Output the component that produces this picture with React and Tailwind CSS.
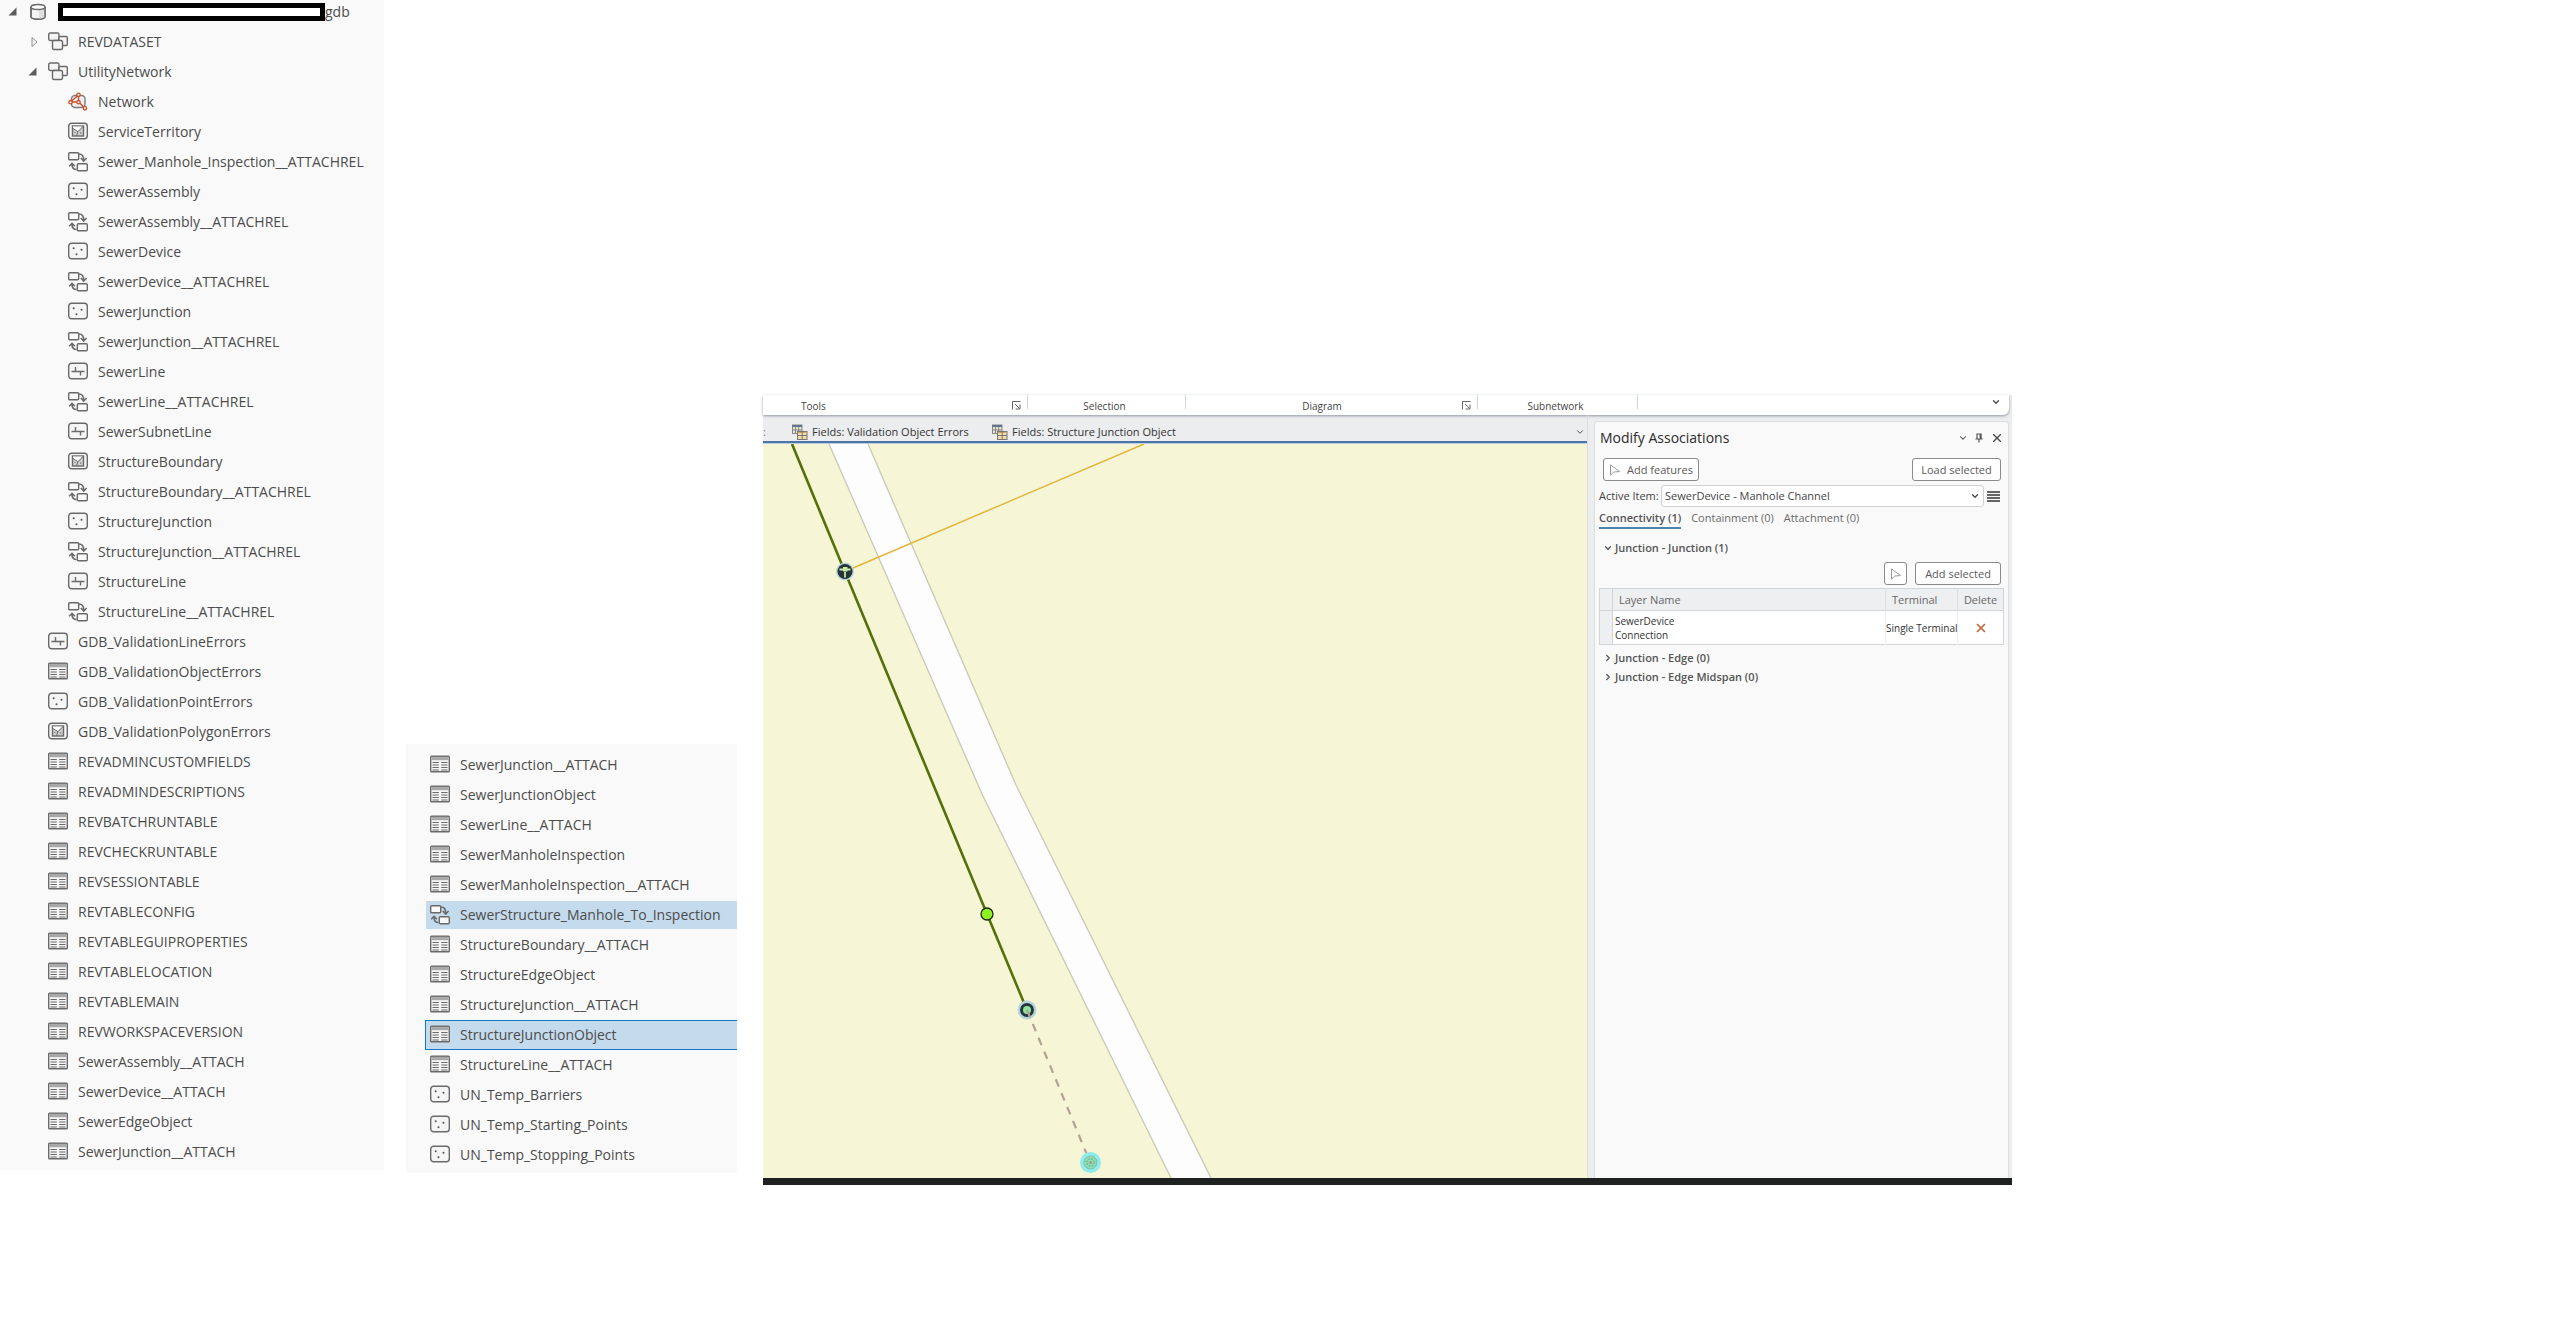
import { useState } from 'react';
import { ChevronDown, ChevronRight, X } from 'lucide-react';

const treeRows = [
  { level: 1, icon: 'dataset', name: 'REVDATASET', state: 'closed' },
  { level: 1, icon: 'dataset', name: 'UtilityNetwork', state: 'open' },
  { level: 2, icon: 'network', name: 'Network' },
  { level: 2, icon: 'polygon', name: 'ServiceTerritory' },
  { level: 2, icon: 'rel', name: 'Sewer_Manhole_Inspection__ATTACHREL' },
  { level: 2, icon: 'point', name: 'SewerAssembly' },
  { level: 2, icon: 'rel', name: 'SewerAssembly__ATTACHREL' },
  { level: 2, icon: 'point', name: 'SewerDevice' },
  { level: 2, icon: 'rel', name: 'SewerDevice__ATTACHREL' },
  { level: 2, icon: 'point', name: 'SewerJunction' },
  { level: 2, icon: 'rel', name: 'SewerJunction__ATTACHREL' },
  { level: 2, icon: 'line', name: 'SewerLine' },
  { level: 2, icon: 'rel', name: 'SewerLine__ATTACHREL' },
  { level: 2, icon: 'line', name: 'SewerSubnetLine' },
  { level: 2, icon: 'polygon', name: 'StructureBoundary' },
  { level: 2, icon: 'rel', name: 'StructureBoundary__ATTACHREL' },
  { level: 2, icon: 'point', name: 'StructureJunction' },
  { level: 2, icon: 'rel', name: 'StructureJunction__ATTACHREL' },
  { level: 2, icon: 'line', name: 'StructureLine' },
  { level: 2, icon: 'rel', name: 'StructureLine__ATTACHREL' },
  { level: 1, icon: 'line', name: 'GDB_ValidationLineErrors' },
  { level: 1, icon: 'table', name: 'GDB_ValidationObjectErrors' },
  { level: 1, icon: 'point', name: 'GDB_ValidationPointErrors' },
  { level: 1, icon: 'polygon', name: 'GDB_ValidationPolygonErrors' },
  { level: 1, icon: 'table', name: 'REVADMINCUSTOMFIELDS' },
  { level: 1, icon: 'table', name: 'REVADMINDESCRIPTIONS' },
  { level: 1, icon: 'table', name: 'REVBATCHRUNTABLE' },
  { level: 1, icon: 'table', name: 'REVCHECKRUNTABLE' },
  { level: 1, icon: 'table', name: 'REVSESSIONTABLE' },
  { level: 1, icon: 'table', name: 'REVTABLECONFIG' },
  { level: 1, icon: 'table', name: 'REVTABLEGUIPROPERTIES' },
  { level: 1, icon: 'table', name: 'REVTABLELOCATION' },
  { level: 1, icon: 'table', name: 'REVTABLEMAIN' },
  { level: 1, icon: 'table', name: 'REVWORKSPACEVERSION' },
  { level: 1, icon: 'table', name: 'SewerAssembly__ATTACH' },
  { level: 1, icon: 'table', name: 'SewerDevice__ATTACH' },
  { level: 1, icon: 'table', name: 'SewerEdgeObject' },
  { level: 1, icon: 'table', name: 'SewerJunction__ATTACH' },
];

const moreRows = [
  { icon: 'table', name: 'SewerJunction__ATTACH' },
  { icon: 'table', name: 'SewerJunctionObject' },
  { icon: 'table', name: 'SewerLine__ATTACH' },
  { icon: 'table', name: 'SewerManholeInspection' },
  { icon: 'table', name: 'SewerManholeInspection__ATTACH' },
  { icon: 'rel', name: 'SewerStructure_Manhole_To_Inspection', mark: 'selected' },
  { icon: 'table', name: 'StructureBoundary__ATTACH' },
  { icon: 'table', name: 'StructureEdgeObject' },
  { icon: 'table', name: 'StructureJunction__ATTACH' },
  { icon: 'table', name: 'StructureJunctionObject', mark: 'focused' },
  { icon: 'table', name: 'StructureLine__ATTACH' },
  { icon: 'point', name: 'UN_Temp_Barriers' },
  { icon: 'point', name: 'UN_Temp_Starting_Points' },
  { icon: 'point', name: 'UN_Temp_Stopping_Points' },
];

const levelPadding = ['pl-2', 'pl-7', 'pl-12'];

const markStyles = {
  selected: 'border border-r-0 border-[#f9f9f9] bg-[#c4daed]',
  focused: 'border border-r-0 border-[#0f7ac2] bg-[#c4daed]',
};

function ItemIcon({ type }) {
  return (
    <svg viewBox="0 0 20 20" className="h-5 w-5 shrink-0" fill="none" stroke="#6a6a6a" strokeWidth="1.4">
      {type === 'database' && (
        <>
          <path d="M3 5v9.500c0 1.600 3 2.700 7 2.700s7-1.100 7-2.700V5" fill="#f4f4f4" />
          <path d="M11 7.500c3 0 5-.8 6-2v9c0 1.600-3 2.500-6 2.500z" fill="#dedede" stroke="none" />
          <path d="M3 5v9.500c0 1.600 3 2.700 7 2.700s7-1.100 7-2.700V5" />
          <ellipse cx="10" cy="5" rx="7" ry="2.500" fill="#fff" />
        </>
      )}
      {type === 'dataset' && (
        <>
          <rect x=".7" y="1" width="10.300" height="7.500" rx="1.500" fill="#f4f4f4" />
          <rect x="11" y="4.500" width="8.300" height="9" rx="1" fill="#f4f4f4" />
          <rect x="4.500" y="8.500" width="10" height="9" rx="1.500" fill="#f4f4f4" />
        </>
      )}
      {type === 'network' && (
        <>
          <rect x="3.500" y="3.500" width="13.500" height="12" rx="3.500" fill="#efefef" stroke="#7c7c7c" />
          <path d="M10.500 3v7M2.500 10h8M10.500 10l6.500 6M10 3.500L3 9.500" stroke="#c8502d" />
          <g fill="#f9f9f9" stroke="#c8502d" strokeWidth="1.300">
            <circle cx="10.500" cy="2.800" r="1.700" />
            <circle cx="2.500" cy="10.200" r="1.700" />
            <circle cx="10.500" cy="10.200" r="1.700" />
            <circle cx="17" cy="16.300" r="1.700" />
          </g>
        </>
      )}
      {type === 'rel' && (
        <>
          <rect x=".7" y=".7" width="10" height="7" rx="1" fill="#f9f9f9" />
          <rect x="9.300" y="11.800" width="10" height="7" rx="1" fill="#f9f9f9" />
          <path d="M11 2c3 0 4.700 2 4.700 6M12.800 6l2.900 3 2.900-3" strokeWidth="1.600" />
          <path d="M8.500 17.500c-3 0-4.500-1.800-4.500-5.500M1.200 14.300L4 11.300l2.900 3" strokeWidth="1.600" />
        </>
      )}
      {type === 'point' && (
        <>
          <rect x=".7" y="1.200" width="18.600" height="15.600" rx="3" fill="#f5f5f5" />
          <g fill="#555" stroke="none">
            <circle cx="5.700" cy="6.300" r="1" />
            <circle cx="13.500" cy="7.700" r="1" />
            <circle cx="8.500" cy="12.300" r="1" />
          </g>
        </>
      )}
      {type === 'line' && (
        <>
          <rect x=".7" y="1.200" width="18.600" height="15.600" rx="3" fill="#f5f5f5" />
          <path d="M3.500 9.500h13M7.500 5v4.500M12.500 9.500v4" />
        </>
      )}
      {type === 'polygon' && (
        <>
          <rect x=".7" y="1.200" width="18.600" height="15.600" rx="3" fill="#f5f5f5" />
          <rect x="4.500" y="4" width="11" height="10" fill="#cfcfcf" />
          <path d="M5 4.500h9.500L9.800 9.500 5 6.800z" fill="#fff" stroke="none" />
          <path d="M5 6.500l5 3.200 5-5.200M10 9.700l-1.500 4" strokeWidth="1" />
          <path d="M6.500 10.500h1M12 11h1.500" strokeWidth="1" />
        </>
      )}
      {type === 'table' && (
        <>
          <rect x=".7" y="1.200" width="18.600" height="15.600" rx=".8" fill="#f5f5f5" />
          <path d="M1.300 1.800h17.400v3.400H1.300z" fill="#a9a9a9" stroke="none" />
          <path
            d="M2.500 7.500h6.300M2.500 10h6.300M2.500 12.500h6.300M2.500 15h6.300M11.200 7.500h6.300M11.200 10h6.300M11.200 12.500h6.300M11.200 15h6.300"
            strokeWidth="1.200"
          />
        </>
      )}
    </svg>
  );
}

function Expander({ state }) {
  return (
    <svg viewBox="0 0 10 10" className="h-2.5 w-2.5 shrink-0">
      {state === 'open' && <path d="M8.500 .5v8H.5z" fill="#5c5c5c" />}
      {state === 'closed' && <path d="M4 0.500v9l5-4.500z" fill="none" stroke="#8c8c8c" />}
    </svg>
  );
}

function CursorIcon() {
  return (
    <svg viewBox="0 0 12 12" className="h-3 w-3 shrink-0" fill="none" stroke="#999">
      <path d="M1.500 .8v10.400l3.300-3.200 5.700-.4z" />
    </svg>
  );
}

function PinIcon() {
  return (
    <svg viewBox="0 0 10 10" className="h-2.5 w-2.5" fill="none" stroke="#555" strokeWidth="1.2">
      <path d="M3 6V1h4v5M1.500 6h7M5 6v3.500" />
      <path d="M6.400 1v5" strokeWidth="1.600" />
    </svg>
  );
}

function FieldsIcon() {
  return (
    <svg viewBox="0 0 16 16" className="h-4 w-4 shrink-0" fill="none">
      <rect x=".5" y="1" width="9.500" height="8.500" fill="#e8e4d4" stroke="#858585" />
      <path d="M.5 2h9.500" stroke="#5f7690" strokeWidth="2" />
      <path d="M3.500 3v6M6.700 3v6M.5 6h9.500" stroke="#858585" />
      <rect x="5.500" y="7.500" width="9.500" height="8" fill="#f3d9a4" stroke="#777" />
      <path d="M6 8.500h8.500" stroke="#c9a86a" />
      <path d="M10.200 8v7.500M5.500 11.500H15" stroke="#777" />
    </svg>
  );
}

function Launcher() {
  return (
    <svg viewBox="0 0 9 9" className="h-[9px] w-[9px]" fill="none" stroke="#666">
      <path d="M.5 8.500v-8h8M3 3l4.500 4.500M8 3.500V8H3.500" />
    </svg>
  );
}

function MapView() {
  return (
    <svg
      viewBox="0 0 824 734"
      preserveAspectRatio="xMinYMin slice"
      className="block w-full flex-1 bg-[#f6f6d6]"
      fill="none"
    >
      <path d="M66 0L219 350 408 734H448L253 341 105 0z" fill="#fdfdfd" />
      <path d="M66 0L219 350 408 734M105 0L253 341 448 734" stroke="#cbcbba" strokeWidth="1.400" />
      <path d="M90 124L381 0" stroke="#e3b53c" strokeWidth="1.500" />
      <path d="M29 0L82 128 224 470 264 566" stroke="#567009" strokeWidth="2.600" />

      <circle cx="82" cy="127.500" r="9" fill="#b4d4d4" />
      <circle cx="82" cy="127.500" r="7.500" fill="#25333a" />
      <path d="M76.500 125.500h11M82 128v5.500" stroke="#c9eda4" strokeWidth="1.800" />
      <rect x="80" y="123" width="4.500" height="4.500" fill="#c9eda4" />

      <circle cx="224" cy="470" r="6" fill="#8ff224" stroke="#1d2a10" strokeWidth="1.300" />

      <circle cx="264" cy="566" r="9.500" fill="#b6d6dc" />
      <circle cx="264" cy="566" r="5.500" fill="#8fe39b" stroke="#25383f" strokeWidth="3" />
      <path d="M264 566L327 718" stroke="#b5a096" strokeWidth="2.200" strokeDasharray="8 7" />

      <circle cx="327.500" cy="718.500" r="10.500" fill="#90ecec" />
      <circle cx="327.500" cy="718.500" r="6.500" fill="#8edcb4" stroke="#7fbfae" />
      <circle cx="327.500" cy="718.500" r="3.500" stroke="#6eb98e" strokeWidth="1.500" strokeDasharray="1.500 1.300" />
      <circle cx="327.500" cy="718.500" r="1.300" fill="#a58f86" />
    </svg>
  );
}

function Ribbon() {
  return (
    <div className="mr-[3px] flex h-5 items-start rounded-br-md bg-white text-center text-[10px] leading-[22px] shadow-sm shadow-gray-400">
      <div className="flex h-3.5 w-[265px] justify-between border-r border-gray-300 pr-1.5 pl-[38px]">
        <span>Tools</span>
        <button type="button" aria-label="Tools options" className="flex h-5 items-center"><Launcher /></button>
      </div>
      <div className="h-3.5 w-[158px] border-r border-gray-300 pr-1">Selection</div>
      <div className="flex h-3.5 w-[292px] border-r border-gray-300 pr-1.5">
        <span className="flex-1 pr-1">Diagram</span>
        <button type="button" aria-label="Diagram options" className="flex h-5 items-center"><Launcher /></button>
      </div>
      <div className="h-3.5 w-[160px] border-r border-gray-300 pr-1">Subnetwork</div>
      <button type="button" aria-label="Collapse ribbon" className="mt-0.5 mr-2 ml-auto">
        <ChevronDown size={10} strokeWidth={3} />
      </button>
    </div>
  );
}

function AssociationsPane() {
  const [activeItem, setActiveItem] = useState('SewerDevice - Manhole Channel');
  const buttonStyle = 'flex h-[23px] items-center justify-center rounded-[3px] border border-[#8a8a8a] bg-white text-[#5a5a5a]';

  return (
    <aside className="mt-1.5 w-[415px] shrink-0 rounded-t border border-b-0 border-[#dcdee0] bg-[#f9f9f9] pr-1 pl-1 text-[11px] leading-4 text-[#444]">
      <header className="flex h-8 items-center gap-1.5 pl-px">
        <h2 className="flex-1 text-[14px] text-[#2b2b2b]">Modify Associations</h2>
        <button type="button" aria-label="Pane menu"><ChevronDown size={10} strokeWidth={2.5} /></button>
        <button type="button" aria-label="Pin pane"><PinIcon /></button>
        <button type="button" aria-label="Close pane"><X size={14} strokeWidth={2} /></button>
      </header>

      <div className="mt-1 flex justify-between pr-[3px] pl-1">
        <button type="button" className={`${buttonStyle} w-24 gap-1.5`}>
          <CursorIcon />
          Add features
        </button>
        <button type="button" className={`${buttonStyle} w-[89px]`}>Load selected</button>
      </div>

      <div className="mt-1 flex items-center pr-[3px]">
        <label htmlFor="active-item" className="w-[62px] whitespace-nowrap">Active Item:</label>
        <div className="relative flex-1">
          <select
            id="active-item"
            value={activeItem}
            onChange={(e) => setActiveItem(e.target.value)}
            className="h-[22px] w-full appearance-none rounded-[3px] border border-[#cfd2d4] bg-white pl-[3px]"
          >
            <option>SewerDevice - Manhole Channel</option>
          </select>
          <ChevronDown size={10} strokeWidth={3} className="pointer-events-none absolute top-1.5 right-1" />
        </div>
        <button type="button" aria-label="Options" className="mr-px ml-[3px] flex w-[13px] flex-col gap-px">
          <span className="h-0.5 bg-[#666]" />
          <span className="h-0.5 bg-[#666]" />
          <span className="h-0.5 bg-[#666]" />
          <span className="h-0.5 bg-[#666]" />
        </button>
      </div>

      <nav className="mt-[3px] flex gap-2.5">
        <button type="button" className="border-b-2 border-[#4a86b0] pb-px font-semibold text-[#555]">Connectivity (1)</button>
        <button type="button" className="border-b-2 border-transparent pb-px text-[#6a6a6a]">Containment (0)</button>
        <button type="button" className="border-b-2 border-transparent pb-px text-[#6a6a6a]">Attachment (0)</button>
      </nav>

      <button type="button" className="mt-[11px] flex items-center gap-0.5 pl-1 font-semibold text-[#555]">
        <ChevronDown size={10} strokeWidth={3} />
        Junction - Junction (1)
      </button>

      <div className="mt-1.5 flex justify-end gap-2 pr-[3px]">
        <button type="button" aria-label="Pick features" className={`${buttonStyle} w-[23px]`}>
          <CursorIcon />
        </button>
        <button type="button" className={`${buttonStyle} w-[86px]`}>Add selected</button>
      </div>

      <table className="mt-[3px] w-full table-fixed border border-[#d2d4d6] bg-white text-left">
        <thead>
          <tr className="h-[22px] border-b border-[#d2d4d6] bg-[#eeeff0] text-[#666]">
            <th scope="col" className="w-[13px] border-r border-[#d2d4d6]" />
            <th scope="col" className="border-r border-[#dcdee0] pl-1.5 font-normal">Layer Name</th>
            <th scope="col" className="w-[72px] border-r border-[#dcdee0] pl-1.5 font-normal">Terminal</th>
            <th scope="col" className="w-[46px] text-center font-normal">Delete</th>
          </tr>
        </thead>
        <tbody>
          <tr className="h-[34px] text-[10px] leading-[14px] text-[#333]">
            <td className="border-r border-[#d2d4d6] bg-[#eeeff0]" />
            <td className="border-r border-[#eee] pl-0.5">SewerDevice<br />Connection</td>
            <td className="border-r border-[#eee] text-center whitespace-nowrap">Single Terminal</td>
            <td>
              <button type="button" aria-label="Delete association" className="mx-auto block text-[#bf6a42]">
                <X size={14} strokeWidth={3} />
              </button>
            </td>
          </tr>
        </tbody>
      </table>

      <div className="mt-[5px] flex flex-col gap-[3px] font-semibold text-[#555]">
        <button type="button" className="flex items-center gap-0.5 pl-1">
          <ChevronRight size={10} strokeWidth={3} />
          Junction - Edge (0)
        </button>
        <button type="button" className="flex items-center gap-0.5 pl-1">
          <ChevronRight size={10} strokeWidth={3} />
          Junction - Edge Midspan (0)
        </button>
      </div>
    </aside>
  );
}

export default function App() {
  return (
    <div className="flex min-h-screen items-start bg-white font-['Open_Sans',sans-serif] text-[#4c4c4c]">
      <ul className="w-[384px] shrink-0 bg-[#f9f9f9] pb-[3px] text-[14px] leading-6">
        <li className="mb-[3px] flex h-6 items-center gap-2.5 pl-2">
          <Expander state="open" />
          <ItemIcon type="database" />
          <span className="flex items-center">
            <span className="h-[18px] w-[267px] border-[5px] border-black bg-white" />
            gdb
          </span>
        </li>
        {treeRows.map((row) => (
          <li key={row.name} className={`flex h-[30px] items-center gap-2.5 ${levelPadding[row.level]}`}>
            <Expander state={row.state} />
            <ItemIcon type={row.icon} />
            {row.name}
          </li>
        ))}
      </ul>

      <ul className="mt-[744px] ml-[22px] w-[331px] shrink-0 bg-[#f9f9f9] pt-1.5 pb-[3px] pl-[19px] text-[14px] leading-6">
        {moreRows.map((row) => (
          <li
            key={row.name}
            className={`flex h-[30px] items-center gap-2.5 whitespace-nowrap ${row.mark ? 'pl-1' : 'pl-[5px]'} ${markStyles[row.mark] || ''}`}
          >
            <ItemIcon type={row.icon} />
            {row.name}
          </li>
        ))}
      </ul>

      <main className="mt-[395px] mr-[543px] ml-[26px] flex min-h-[790px] flex-1 flex-col border-b-[7px] border-[#1f2121] bg-[#ecedee] text-[#444]">
        <Ribbon />
        <div className="flex flex-1">
          <div className="mr-1.5 flex flex-1 flex-col border-r border-[#dcdedd]">
            <div className="flex h-[26px] items-center pt-2 text-[11px] leading-4 text-[#333]">
              <span className="w-[29px] text-[#777]">:</span>
              <button type="button" className="flex w-[200px] items-center gap-1 whitespace-nowrap">
                <FieldsIcon />
                Fields: Validation Object Errors
              </button>
              <button type="button" className="flex items-center gap-1 whitespace-nowrap">
                <FieldsIcon />
                Fields: Structure Junction Object
              </button>
              <button type="button" aria-label="More tabs" className="mr-0.5 ml-auto">
                <ChevronDown size={10} strokeWidth={2} />
              </button>
            </div>
            <div className="h-[3px] border-b border-[#b9cfe4] bg-[#4e74a6]" />
            <MapView />
          </div>
          <AssociationsPane />
          <div className="w-[3px]" />
        </div>
      </main>
    </div>
  );
}
